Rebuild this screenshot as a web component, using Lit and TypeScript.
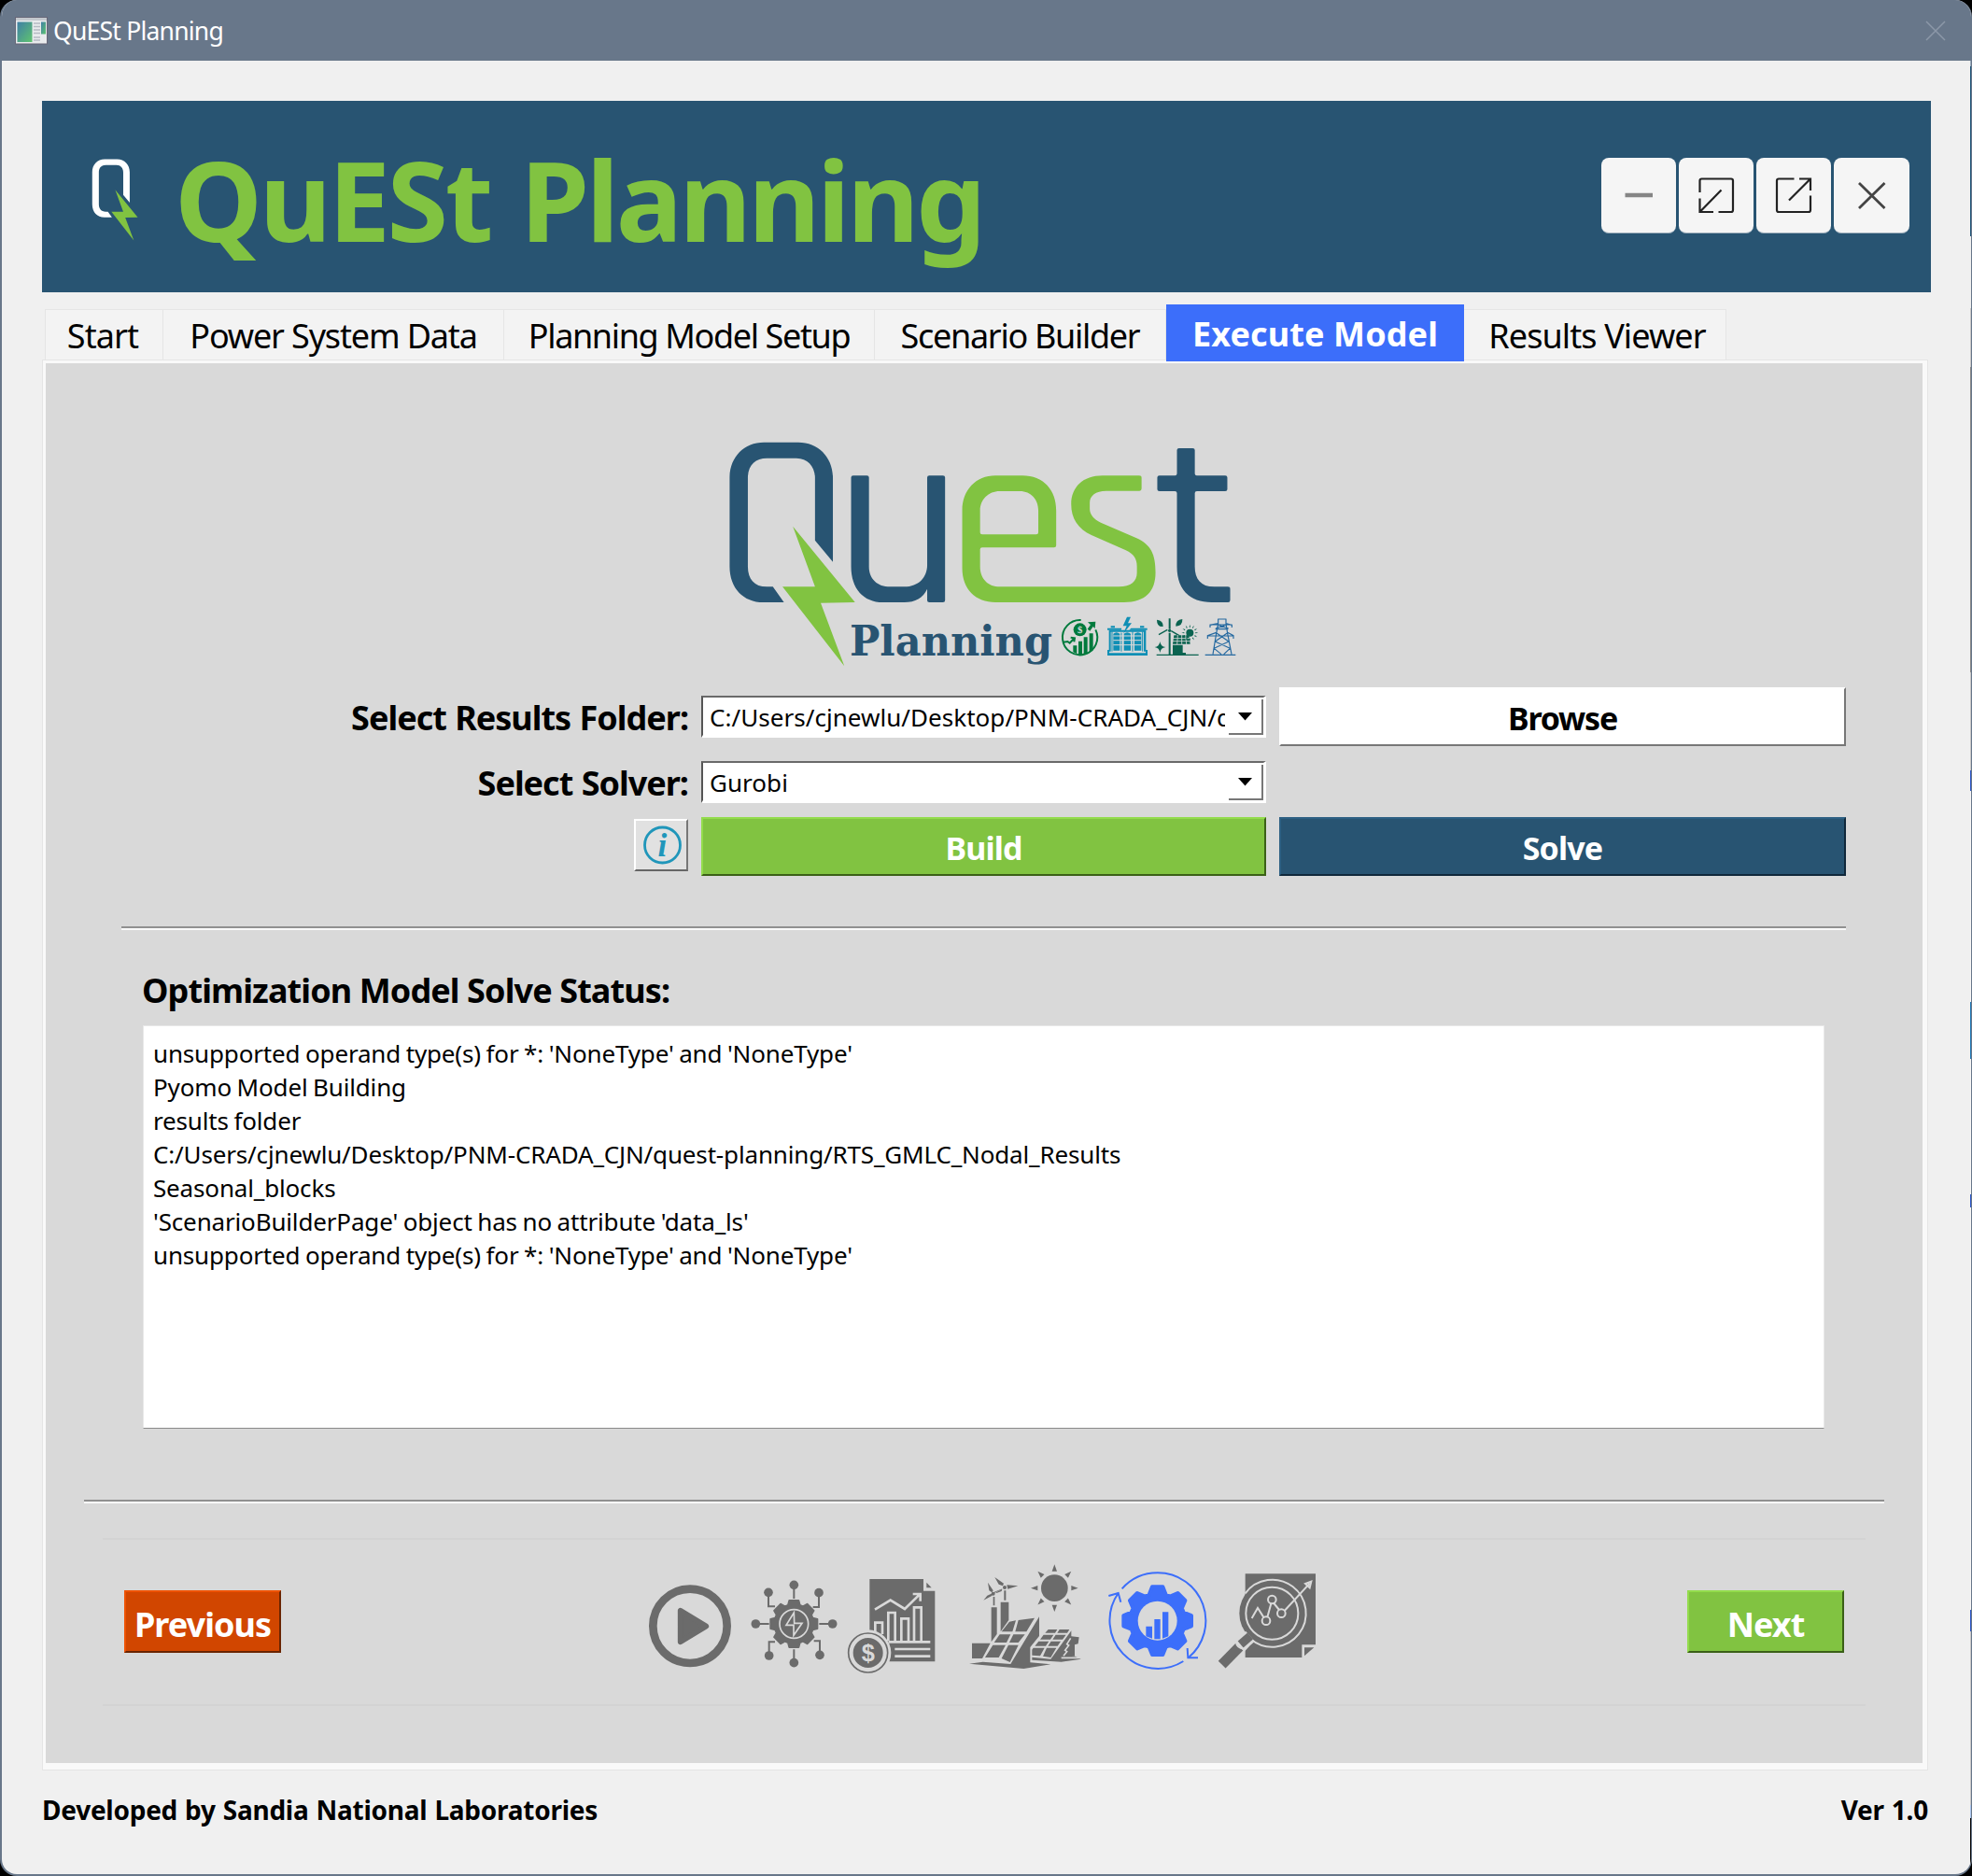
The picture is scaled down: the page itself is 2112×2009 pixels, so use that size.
import { LitElement, html, svg, css } from "lit";
import { customElement, property, state } from "lit/decorators.js";
import { classMap } from "lit/directives/class-map.js";

const FONT = css`"Noto Sans", "Open Sans", "Liberation Sans", sans-serif`;

const Q_BODY =
  "M345 455V185C345 120 305 71 248 71H152C95 71 56 120 56 185V470C56 540 95 585 150 585H208L177 535H160C125 535 107 510 107 470V185C107 145 128 122 160 122H243C275 122 295 150 295 185V386Z";
const Q_BOLT = "M233 341L407 585L311 587L377 790L204 535H295Z";

/** Outline of a cog with evenly spaced trapezoid teeth. */
function cog(cx: number, cy: number, outer: number, root: number, top: number, base: number, teeth = 8): string {
  const pts: string[] = [];
  for (let i = 0; i < teeth; i++) {
    const a = (i * 2 * Math.PI) / teeth;
    const place = (r: number, w: number) =>
      `${(cx + r * Math.sin(a) + w * Math.cos(a)).toFixed(1)} ${(cy - r * Math.cos(a) + w * Math.sin(a)).toFixed(1)}`;
    pts.push(place(root, -base), place(outer, -top), place(outer, top), place(root, base));
  }
  return `M${pts.join("L")}Z`;
}

/** Triangular rays round a centre point. */
function rays(cx: number, cy: number, from: number, to: number, half: number, count = 8): string {
  let d = "";
  for (let i = 0; i < count; i++) {
    const a = (i * 2 * Math.PI) / count;
    const s = Math.sin(a);
    const c = Math.cos(a);
    d += `M${(cx + from * s - half * c).toFixed(1)} ${(cy - from * c - half * s).toFixed(1)}`;
    d += `L${(cx + to * s).toFixed(1)} ${(cy - to * c).toFixed(1)}`;
    d += `L${(cx + from * s + half * c).toFixed(1)} ${(cy - from * c + half * s).toFixed(1)}Z`;
  }
  return d;
}

@customElement("quest-logo")
export class QuestLogo extends LitElement {
  static styles = css`
    :host { display: block; width: 600px; height: 280px; }
    svg { display: block; }
    .word { font: bold 44px "DejaVu Serif", "Liberation Serif", serif; fill: #285472; }
    .coin { font: bold 32px "Liberation Serif", serif; fill: #d9d9d9; }
  `;

  render() {
    return html`<svg width="600" height="280" viewBox="0 0 600 280">
      <g transform="scale(.38265 .33333)">
        <path fill="#285472" d=${Q_BODY} />
        <path fill="#81c341" d=${Q_BOLT} />
        <path fill="#285472" d="M396 184q0-6 6-6H440q6 0 6 6V470C446 510 470 535 505 535H545C585 535 609 505 609 465V184q0-6 6-6H653q6 0 6 6V579q0 6-6 6H615q-6 0-6-6V542C598 570 575 585 545 585H485C430 585 396 540 396 470Z" />
        <path fill="#81c341" fill-rule="evenodd" d="M800 178H875C935 178 970 225 970 290V402q0 7-6 7H763q-6 0-6 6V470C757 510 780 535 812 535H1145C1180 535 1196 518 1196 490V470C1196 445 1187 430 1165 418L1070 370C1030 348 1012 315 1012 270C1012 215 1045 178 1100 178H1202q7 0 7 7V220q0 7-6 7H1110C1080 227 1064 243 1064 265V285C1064 303 1075 318 1095 329L1195 379C1235 400 1248 430 1248 490C1248 550 1220 585 1160 585H800C745 585 707 545 707 475V290C707 225 745 178 800 178ZM812 228H868C900 228 920 255 920 290V361q0 6-6 6H763q-6 0-6-6V290C757 255 780 228 812 228Z" />
        <path fill="#285472" d="M1308 96q0-6 6-6H1352q6 0 6 6V172q0 6 6 6H1443q6 0 6 6V222q0 6-6 6H1364q-6 0-6 6V470C1358 510 1375 535 1412 535H1450q7 0 7 7V578q0 7-6 7H1405C1345 585 1308 545 1308 470V234q0-6-6-6H1259q-6 0-6-6V184q0-6 6-6H1302q6 0 6-6Z" />
      </g>
      <text class="word" x="150" y="251.5" textLength="217" lengthAdjust="spacingAndGlyphs">Planning</text>
      <g transform="translate(360 195) scale(.33333)">
        <g fill="#007a3d">
          <path fill="none" stroke="#007a3d" stroke-width="6" d="M113 57A56 56 0 1 0 160 88" />
          <path d="M135 64L160 62L158 84L152 78L142 92L134 86L144 72Z" />
          <path fill="none" stroke="#007a3d" stroke-width="6" d="M57 128L70 126L77 131L90 117M80 113L93 115L91 127" />
          <circle cx="110" cy="88" r="21" />
          <path d="M88 139H100V166L88 160ZM105 125H117V169H105ZM122 112H134V166L122 169ZM140 100H152V154L140 163Z" />
          <text class="coin" x="102" y="99">$</text>
        </g>
        <g fill="#0f8fb5">
          <path d="M261 47L248 76H260L249 101L276 67H264L273 47Z" />
          <path d="M198 83H244L242 89H198ZM274 83H326V89H268ZM209 76H222V82H209ZM303 76H316V82H303Z" />
          <path d="M203 89H209V158H203ZM315 89H322V158H315ZM205 89H320V95H205Z" />
          <path d="M198 153H204V163H321V153H327V171H198Z" />
          <path d="M217 101Q227 92 238 101V155H217ZM251 101Q261 92 273 101V155H251ZM285 101Q296 92 307 101V155H285Z" />
          <path fill="none" stroke="#0f8fb5" stroke-width="3" d="M213 94V158M243 98V158M279 94V158M311 94V158" />
          <path fill="none" stroke="#d9d9d9" stroke-width="3" d="M217 108H307M217 122H307M217 137H307" />
        </g>
        <g fill="#0b6350">
          <path d="M357 56Q378 58 377 78Q357 80 357 56ZM439 54Q440 76 418 77Q417 56 439 54Z" />
          <path d="M395 52H401V86H395ZM392 90L364 106L362 102L390 86ZM404 90L430 105L427 109L402 94ZM395 98H401V169H395Z" />
          <circle cx="398" cy="91" r="5" />
          <path d="M412 106H460L464 134H408Z" /><path d="M408 137H440V168H408ZM430 162H450V169H430Z" />
          <path stroke="#d9d9d9" stroke-width="2.5" fill="none" d="M408 116H463M408 125H463M424 105L422 135M437 105V135M449 105L452 135" />
          <circle cx="463" cy="98" r="12" />
          <path d=${rays(463, 98, 18, 27, 2, 12)} />
          <path d="M367 126Q369 142 385 144Q369 146 367 162Q365 146 350 144Q365 142 367 126Z" />
          <path d="M356 167H491V171H356Z" />
        </g>
        <path fill="none" stroke="#2569a0" stroke-width="3.500" d="M512 169H610M553 54H580M554 53V68L548 100L537 167M579 53V68L584 100L597 167M554 68L528 73V81M579 68L598 73V81M527 72H599M546 84L580 72M553 72L587 84M545 86H586M519 108H604M548 97L520 107V117M584 97L603 107V117M548 98L588 126M584 98L544 126M544 126L592 148M588 126L541 148M541 148L564 167M592 148L572 167" />
      </g>
    </svg>`;
  }
}

type StepName = "start" | "data" | "setup" | "scenario" | "execute" | "results";

@customElement("step-icon")
export class StepIcon extends LitElement {
  @property() name: StepName = "start";

  static styles = css`
    :host { display: block; color: #6b6b6b; }
    :host([active]) { color: #3c6efa; }
    svg { display: block; overflow: visible; }
    .coin { font: bold 76px "Liberation Sans", sans-serif; fill: #d9d9d9; }
  `;

  private box: Record<StepName, [number, number]> = {
    start: [0, 390],
    data: [390, 310],
    setup: [700, 350],
    scenario: [0, 450],
    execute: [450, 390],
    results: [840, 360],
  };

  private art(name: StepName) {
    switch (name) {
      case "start":
        return svg`<circle cx="207" cy="244" r="119" fill="none" stroke="currentColor" stroke-width="26"/>
          <path d="M176 194V295L259 244.500Z" fill="currentColor" stroke="currentColor" stroke-width="17" stroke-linejoin="round"/>`;
      case "data":
        return svg`<path d=${cog(541, 237, 75, 60, 15, 19)} fill="currentColor" stroke="currentColor" stroke-width="6" stroke-linejoin="round"/>
          <circle cx="541" cy="237" r="46" fill="none" stroke="#d9d9d9" stroke-width="5"/>
          <path d="M541 201L516 241H540V274L567 235H542Z" fill="none" stroke="#d9d9d9" stroke-width="5"/>
          <path d="M541 112V156M541 362V319M418 237H461M665 237H622M459 136V181H480M621 136V183H602M461 339V295H480M624 337V292H605" fill="none" stroke="currentColor" stroke-width="6"/>
          ${[[541, 112], [541, 362], [418, 237], [665, 237], [459, 136], [621, 137], [461, 339], [624, 337]].map(
            ([x, y]) => svg`<circle cx=${x} cy=${y} r="14.500" fill="currentColor"/>`
          )}`;
      case "setup":
        return svg`<path d="M785 93H958V131H995V358H785Z" fill="currentColor"/>
          <path d="M968 104V121H984Z" fill="currentColor"/>
          <path d="M802 191L852 161L898 189L946 142M924 141H948V164" fill="none" stroke="#d9d9d9" stroke-width="8"/>
          <path d="M803 262V233H826V270M845 292V201H867V292M887 292V220H910V292M928 292V184H951V292" fill="none" stroke="#d9d9d9" stroke-width="8"/>
          <path d="M846 295H980M866 318H980M866 341H980" stroke="#d9d9d9" stroke-width="8"/>
          <circle cx="780" cy="330" r="74" fill="#d9d9d9"/>
          <circle cx="780" cy="330" r="63" fill="none" stroke="currentColor" stroke-width="5"/>
          <circle cx="780" cy="330" r="48" fill="currentColor"/>
          <text class="coin" x="759" y="356">$</text>`;
      case "scenario":
        return svg`<g fill="currentColor">
          <circle cx="328" cy="122" r="43"/>
          <path d=${rays(328, 122, 54, 76, 8)}/>
          <path d="M136 87L165 107L162 115L149 110ZM175 112L211 115L178 125ZM161 124L135 134L134 138L156 128ZM114 104L131 130L127 136L118 130ZM100 161L112 146L125 140L128 146ZM140 134L160 126L158 132L142 138Z"/>
          <circle cx="168" cy="120" r="6"/><circle cx="131" cy="140" r="6"/>
          <path d="M166 130H172V161H166ZM131 150H136V178H131Z"/>
          <path d="M155 167H181V225L155 262ZM125 184H143V270L125 295ZM63 299H122L96 348H63Z"/>
          <path d="M183 230L204 226L193 262H158ZM212 225L264 218L238 262H202ZM152 271H187L174 297H134ZM196 271H233L212 297H183ZM130 305H171L149 345H105ZM180 305H212L185 360L158 348Z"/>
          <path d="M279 214V276L250 312V361L316 367L229 381L54 365L98 359L187 366Z"/>
          <path d="M308 255H337L330 266H298ZM344 255H376L369 266H337ZM293 272H325L315 287H282ZM332 272H365L354 287H322ZM277 293H310L300 308H265ZM317 293H348L338 308H307ZM260 314H296L282 340L256 338V320ZM303 314H334L316 345L291 341Z"/>
          <path d="M382 259V277L407 280L404 301L393 304V340L350 343L360 325L413 350L350 359L256 353V344L316 350Z"/>
          </g><path d="M380 283L368 302L374 306L362 322L368 326L357 340M350 346H412" fill="none" stroke="#d9d9d9" stroke-width="5"/>`;
      case "execute":
        return svg`<path d=${cog(659, 227, 109, 84, 17, 27)} fill="currentColor" stroke="currentColor" stroke-width="12" stroke-linejoin="round"/>
          <circle cx="659" cy="227" r="63" fill="#d9d9d9"/>
          <path d="M622 245H642V284L622 277ZM649 222H668V286H649ZM675 199H694V277L675 284Z" fill="currentColor"/>
          <path d="M545 124A153.700 153.700 0 0 1 659 73A154 154 0 0 1 759 345M755 315L757 346H789M742 357A154.500 154.500 0 0 1 533 138M502 147L533 138L541 167" fill="none" stroke="currentColor" stroke-width="6"/>`;
      case "results":
        return svg`<path d="M941 76H1167V304H1123V345H941Z" fill="currentColor"/>
          <path d="M1131 313H1162L1131 340Z" fill="currentColor"/>
          <circle cx="1029" cy="203" r="107" fill="currentColor"/>
          <path d="M941 139A108 108 0 1 1 960 287" fill="none" stroke="#d9d9d9" stroke-width="6"/>
          <circle cx="1027" cy="203" r="84" fill="none" stroke="#d9d9d9" stroke-width="6"/>
          <path d="M962 219L981 186L1001 217M1012 215L1024 172M1033 171L1050 192M1067 195L1148 107M1134 108L1153 101L1148 121Z" fill="none" stroke="#d9d9d9" stroke-width="6"/>
          <circle cx="1027" cy="159" r="13" fill="none" stroke="#d9d9d9" stroke-width="6"/>
          <circle cx="1057" cy="203" r="13" fill="none" stroke="#d9d9d9" stroke-width="6"/>
          <circle cx="1008" cy="227" r="13" fill="none" stroke="#d9d9d9" stroke-width="6"/>
          <path d="M872 364L914 320L940 292L957 277" fill="none" stroke="#d9d9d9" stroke-width="44"/>
          <path d="M866 368L922 311" fill="none" stroke="currentColor" stroke-width="33"/>
          <path d="M926 303L957 276" fill="none" stroke="currentColor" stroke-width="27"/>
          <path d="M912 297Q914 314 936 317" fill="none" stroke="#d9d9d9" stroke-width="6"/>`;
    }
  }

  render() {
    const [x, w] = this.box[this.name];
    return html`<svg width=${w / 3} height="150" viewBox="${x} 0 ${w} 450">${this.art(this.name)}</svg>`;
  }
}

@customElement("combo-field")
export class ComboField extends LitElement {
  @property() value = "";

  static styles = css`
    :host { display: block; align-self: center; }
    .field { box-sizing: border-box; height: 45px; display: flex; background: #fff; border: solid; border-width: 2px 3px 3px 2px; border-color: #6a6a6a #fff #fff #555; padding-left: 7px; }
    .text { flex: 1; overflow: hidden; white-space: nowrap; font: 26px/43px ${FONT}; letter-spacing: 0.04px; margin-right: 4px; }
    .drop { box-sizing: border-box; width: 37px; height: 38px; margin-top: 2px; border: solid #777; border-width: 0 2px 2px 0; display: flex; justify-content: center; padding-top: 14px; }
    .drop svg { display: block; }
  `;

  render() {
    return html`<div class="field">
      <div class="text">${this.value}</div>
      <div class="drop"><svg width="15" height="9" viewBox="0 0 15 9"><path d="M0 0H15L7.500 8.500Z" /></svg></div>
    </div>`;
  }
}

@customElement("app-root")
export class AppRoot extends LitElement {
  @state() private tab = "Execute Model";

  private tabs = [
    { label: "Start", cls: "t-start" },
    { label: "Power System Data", cls: "t-data" },
    { label: "Planning Model Setup", cls: "t-setup" },
    { label: "Scenario Builder", cls: "t-scenario" },
    { label: "Execute Model", cls: "t-execute" },
    { label: "Results Viewer", cls: "t-results" },
  ];

  private steps: StepName[] = ["start", "data", "setup", "scenario", "execute", "results"];

  private log = [
    "unsupported operand type(s) for *: 'NoneType' and 'NoneType'",
    "Pyomo Model Building",
    "results folder",
    "C:/Users/cjnewlu/Desktop/PNM-CRADA_CJN/quest-planning/RTS_GMLC_Nodal_Results",
    "Seasonal_blocks",
    "'ScenarioBuilderPage' object has no attribute 'data_ls'",
    "unsupported operand type(s) for *: 'NoneType' and 'NoneType'",
  ];

  static styles = css`
    :host { display: block; width: 2112px; height: 2009px; background: #000; font-family: ${FONT}; color: #000; overflow: hidden; }
    * { box-sizing: border-box; }
    svg { display: block; }
    .window { width: 2112px; height: 2009px; border-radius: 18px; border: solid #68778a; border-width: 0 1px 2px 2px; background: #f0f0f0; overflow: hidden; display: flex; flex-direction: column; position: relative; }
    .edge { position: absolute; right: 0; top: 65px; width: 1px; height: 1942px; background: linear-gradient(#9ab 0 6px, #1c5377 6px 188px, #eee 188px 265px, #c8c8c8 265px 328px, #888 328px 655px, #c8c8c8 655px 760px, #2a55c8 760px 782px, #f5f5f5 782px 1008px, #1d76b4 1008px 1069px, #f5f5f5 1069px 1214px, #2a55c8 1214px 1228px, #f5f5f5 1228px 1659px, #2a55c8 1659px 1682px, #c8c8c8 1682px 1868px, #a9c4f0 1868px 1882px, #000 1882px); }
    .titlebar { height: 65px; flex: none; background: #68778a; display: flex; align-items: center; padding: 0 27px 0 14px; color: #fff; font-size: 26.500px; }
    .titlebar .name { flex: 1; margin: 1px 0 0 6px; letter-spacing: -0.78px; }
    .banner { height: 205px; flex: none; margin: 43px 43px 0; background: #285472; display: flex; align-items: flex-start; padding-left: 46px; }
    .banner .mark { width: 66px; margin-top: 54px; }
    .banner h1 { margin: 10px 0 0 30px; flex: 1; font-size: 119px; line-height: 190px; font-weight: 700; color: #81c341; letter-spacing: -3.5px; word-spacing: 5px; white-space: nowrap; }
    .controls { display: flex; gap: 2.6px; margin: 61px 23.500px 0 0; }
    .control { width: 80.5px; height: 81px; border-radius: 8px; background: #f5f5f5; border-bottom: 1px solid #9fb0bd; }
    .tabs { height: 72px; flex: none; display: flex; align-items: flex-end; padding-left: 46px; }
    .tab { height: 54px; background: #f3f3f3; border: 1px solid #e5e5e5; border-left: 0; border-bottom: 0; font-size: 36px; line-height: 56px; text-align: center; white-space: nowrap; letter-spacing: -0.9px; }
    .tab.t-start { width: 127px; border-left: 1px solid #e5e5e5; padding-right: 3px; }
    .tab.t-data { width: 365px; letter-spacing: -1.15px; }
    .tab.t-setup { width: 397px; letter-spacing: -1.37px; }
    .tab.t-scenario { width: 312px; letter-spacing: -1.3px; }
    .tab.t-execute { width: 319px; }
    .tab.t-results { width: 281px; padding-left: 5px; }
    .tab.on { height: 61px; margin-bottom: -2px; background: #3c6efa; border: 0; color: #fff; font-weight: 700; line-height: 63px; position: relative; letter-spacing: 0.12px; }
    .pane { height: 1511px; flex: none; margin: 0 46px 0 43px; background: #f9f9f9; border: 1px solid #e5e5e5; padding: 3px 5px 7px 3px; display: flex; }
    .page { flex: 1; background: #d9d9d9; display: flex; flex-direction: column; }
    .logo { margin: 61px 0 0 711px; }
    .form { margin: 6px 0 0 81px; display: grid; grid-template-columns: 607px 605px 607px; column-gap: 14px; row-gap: 7.5px; grid-template-rows: 63px 61px 63px; }
    .label { align-self: center; text-align: right; font-size: 36px; font-weight: 700; line-height: 50px; letter-spacing: -1px; word-spacing: 1px; white-space: nowrap; padding-top: 3px; }
    .btn { display: flex; align-items: center; justify-content: center; font-size: 34px; line-height: 40px; font-weight: 700; border: 2px solid; color: #fff; white-space: nowrap; letter-spacing: -0.85px; padding-top: 2px; }
    .white { background: #fff; color: #000; border-color: #fff #777 #777 #fff; letter-spacing: -1.2px; }
    .green { background: #81c341; border-color: #93dc4c #3b6017 #3b6017 #93dc4c; }
    .blue { background: #285472; border-color: #2d6083 #10283a #10283a #2d6083; }
    .red { background: #d14600; border-color: #ee5202 #6a2400 #6a2400 #ee5202; }
    .info { justify-self: end; width: 58px; height: 56px; margin-top: 2px; background: #e1e1e1; border: 2px solid; border-color: #fff #777 #666 #fff; }
    .info svg { margin: -2px; }
    .info .i { font: italic bold 35px "Liberation Serif", serif; fill: #2096ba; }
    .empty { display: block; }
    .rule { flex: none; height: 4px; background: linear-gradient(#909090 0 50%, #fafafa 50%); }
    .rule.one { margin: 54px 82px 0 81px; }
    .rule.two { margin: 76px 41px 0 41px; }
    .heading { margin: 40px 0 0 103px; font-size: 36px; line-height: 50px; font-weight: 700; letter-spacing: -0.9px; }
    .log { margin: 12px 105px 0 104px; height: 432px; background: #fff; border: 1px solid #e8e8e8; border-bottom-color: #8a8a8a; padding: 11px 10px; font-size: 26px; line-height: 36px; letter-spacing: -0.16px; word-spacing: -1px; white-space: nowrap; }
    .nav { margin: 37px 61px 0; height: 180px; border: solid #d3d3d3; border-width: 2px 0; display: flex; align-items: flex-start; padding: 0 23px; }
    .nav .btn { height: 67px; width: 168px; margin-top: 54px; font-size: 36px; letter-spacing: -0.95px; padding-top: 6px; }
    .steps { display: flex; margin: 11px auto 0 369px; }
    .footer { display: flex; justify-content: space-between; margin: 20px 46px 0 43px; font-size: 28px; line-height: 44px; font-weight: 700; letter-spacing: -0.25px; word-spacing: 1px; }
  `;

  private controlIcon(d: string, w = 2.2, c = "#222") {
    return html`<svg width="81" height="81" viewBox="0 0 81 81"><path d=${d} fill="none" stroke=${c} stroke-width=${w} /></svg>`;
  }

  render() {
    return html`
      <div class="window">
        <div class="titlebar">
          <svg width="35" height="30" viewBox="0 0 35 30">
            <defs><linearGradient id="scr" x1="0" y1="0" x2="1" y2="1"><stop offset="0" stop-color="#3f7fa6" /><stop offset="1" stop-color="#5fc46f" /></linearGradient></defs>
            <rect x=".5" y=".5" width="34" height="28.500" fill="#e9ebed" stroke="#667" />
            <rect x="1" y="1" width="33" height="3" fill="#c3c8ce" />
            <rect x="2.500" y="5.500" width="16" height="21.500" fill="url(#scr)" />
            <rect x="28" y="5.500" width="5" height="13" fill="url(#scr)" />
            <path d="M20 7H27M20 10.500H27M20 14H27M20 17.500H27M20 22H27M20 25H27" stroke="#b5bbc2" stroke-width="1.500" />
          </svg>
          <span class="name">QuESt Planning</span>
          <svg width="22" height="22" viewBox="0 0 22 22"><path d="M1 1L21 21M21 1L1 21" stroke="#8c98a8" stroke-width="1.500" /></svg>
        </div>
        <div class="banner">
          <svg class="mark" width="66" height="100" viewBox="0 0 66 100">
            <g transform="scale(.1389 .121)">
              <path fill="#fff" d=${Q_BODY} />
              <path fill="#81c341" d=${Q_BOLT} />
            </g>
          </svg>
          <h1>QuESt Planning</h1>
          <div class="controls">
            <div class="control">${this.controlIcon("M25.500 40H55", 4.5, "#858585")}</div>
            <div class="control">${this.controlIcon("M22.500 37V24.500q0-2 2-2H56q2 0 2 2V56q0 2-2 2H42.500M37 58H22.500V43.500M22.500 58L45.500 34.500")}</div>
            <div class="control">${this.controlIcon("M40.500 22.500H24q-2 0-2 2V56q0 2 2 2H56q2 0 2-2V40.500M58 35V22.500H46M58 22.500L35 45.500")}</div>
            <div class="control">${this.controlIcon("M27 27L54.500 54M54.500 27L27 54", 2.8, "#444")}</div>
          </div>
        </div>
        <div class="tabs">
          ${this.tabs.map(
            (t) => html`<div class=${classMap({ tab: true, [t.cls]: true, on: t.label === this.tab })} @click=${() => (this.tab = t.label)}>${t.label}</div>`
          )}
        </div>
        <div class="pane">
          <div class="page">
            <quest-logo class="logo"></quest-logo>
            <div class="form">
              <div class="label">Select Results Folder:</div>
              <combo-field value="C:/Users/cjnewlu/Desktop/PNM-CRADA_CJN/quest-planning"></combo-field>
              <div class="btn white">Browse</div>
              <div class="label">Select Solver:</div>
              <combo-field value="Gurobi"></combo-field>
              <span class="empty"></span>
              <div class="info">
                <svg width="58" height="56" viewBox="0 0 58 56">
                  <circle cx="30.500" cy="28" r="19" fill="none" stroke="#2096ba" stroke-width="2.800" />
                  <text class="i" x="25.500" y="39.500">i</text>
                </svg>
              </div>
              <div class="btn green">Build</div>
              <div class="btn blue">Solve</div>
            </div>
            <div class="rule one"></div>
            <div class="heading">Optimization Model Solve Status:</div>
            <div class="log">${this.log.map((line) => html`<div>${line}</div>`)}</div>
            <div class="rule two"></div>
            <div class="nav">
              <div class="btn red">Previous</div>
              <div class="steps">
                ${this.steps.map((s) => html`<step-icon name=${s} ?active=${s === "execute"}></step-icon>`)}
              </div>
              <div class="btn green">Next</div>
            </div>
          </div>
        </div>
        <div class="footer"><span>Developed by Sandia National Laboratories</span><span>Ver 1.0</span></div>
        <div class="edge"></div>
      </div>
    `;
  }
}
